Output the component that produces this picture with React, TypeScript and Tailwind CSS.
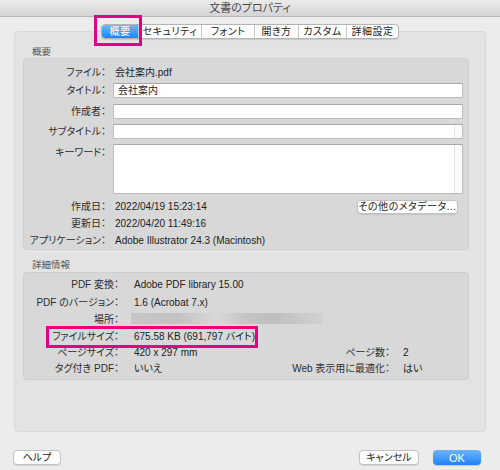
import React from "react";

const tabs = [
  { label: "概要", w: "w-[36px]" },
  { label: "セキュリティ", w: "w-[63px]" },
  { label: "フォント", w: "w-[53px]" },
  { label: "開き方", w: "w-[44px]" },
  { label: "カスタム", w: "w-[48px]" },
  { label: "詳細設定", w: "w-[52px]" },
];

function Label({ children }: { children: React.ReactNode }) {
  return <div className="w-[82px] shrink-0 whitespace-nowrap text-right text-[#2e2e2e]">{children}</div>;
}

function TextInput({ value, scroll }: { value?: string; scroll?: boolean }) {
  return (
    <div className="ml-[7px] flex h-[15px] w-[350px] items-center border border-[#bcbcbc] border-t-[#a9a9a9] bg-white">
      <span className="flex-1 pl-[4px] text-[#222]">{value}</span>
      {scroll && <div className="h-full w-[8px] border-l border-[#e6e6e6] bg-[#fafafa]" />}
    </div>
  );
}

function InfoRow({ h, label, value, rLabel, rValue, children }: {
  h: string;
  label: string;
  value?: React.ReactNode;
  rLabel?: string;
  rValue?: string;
  children?: React.ReactNode;
}) {
  return (
    <div className={`relative flex items-center whitespace-nowrap ${h}`}>
      <div className="w-[95px] shrink-0 text-right text-[#2e2e2e]">{label}</div>
      <div className="ml-[15px] w-[150px] shrink-0 text-[#222]">{value}</div>
      {rLabel && <div className="w-[106px] shrink-0 text-right text-[#2e2e2e]">{rLabel}</div>}
      {rValue && <div className="ml-[13px] text-[#222]">{rValue}</div>}
      {children}
    </div>
  );
}

export default function App() {
  return (
    <div className="flex h-[470px] w-[500px] flex-col overflow-hidden bg-[#ececec] font-['Liberation_Sans','Noto_Sans_CJK_JP',sans-serif] text-[10px] leading-[12px] [font-feature-settings:'palt']">
      {/* タイトルバー */}
      <div className="flex h-[17px] shrink-0 items-center justify-center border-b border-[#b8b8b8] bg-gradient-to-b from-[#ebebeb] to-[#d4d4d4] text-[11px] text-[#4a4a4a]">
        文書のプロパティ
      </div>

      {/* タブパネル */}
      <div className="relative mx-[14px] mt-[14px] h-[401px] shrink-0 rounded-[4px] border border-[#d8d8d8] bg-[#e3e3e3]">
        <div className="relative -mt-[8px] ml-[86px] flex h-[15px] w-fit rounded-[4px] border border-[#b4b4b4] bg-white shadow-[0_1px_1px_rgba(0,0,0,0.12)]">
          {tabs.map((t, i) => (
            <div
              key={t.label}
              className={`flex items-center justify-center tracking-[0.5px] ${t.w} ${
                i === 0
                  ? "rounded-l-[3px] bg-gradient-to-b from-[#6db6fb] to-[#1c83f8] text-white"
                  : "border-l border-[#c8c8c8] text-[#222]"
              }`}
            >
              {t.label}
            </div>
          ))}
          <div className="pointer-events-none absolute -left-[8px] -top-[10px] h-[31px] w-[48px] border-[3px] border-[#e4007f]" />
        </div>

        <div className="mt-[7px] h-[12px] pl-[17px] text-[9.5px] text-[#555]">概要</div>

        {/* 概要グループ */}
        <div className="ml-[8px] mr-[16px] h-[192px] rounded-[4px] border border-[#cfcfcf] bg-[#d8d8d8]">
          <div className="mt-[7px] flex h-[14px] items-center">
            <Label>ファイル：</Label>
            <span className="ml-[9px] text-[#222]">会社案内.pdf</span>
          </div>
          <div className="mt-[3px] flex items-center">
            <Label>タイトル：</Label>
            <TextInput value="会社案内" />
          </div>
          <div className="mt-[6px] flex items-center">
            <Label>作成者：</Label>
            <TextInput />
          </div>
          <div className="mt-[5px] flex items-center">
            <Label>サブタイトル：</Label>
            <TextInput scroll />
          </div>
          <div className="mt-[5px] flex items-start">
            <div className="pt-[3px]">
              <Label>キーワード：</Label>
            </div>
            <div className="ml-[7px] flex h-[50px] w-[350px] border border-[#bcbcbc] border-t-[#a9a9a9] bg-white">
              <div className="flex-1" />
              <div className="h-full w-[8px] border-l border-[#e6e6e6] bg-[#fafafa]" />
            </div>
          </div>
          <div className="mt-[4px] flex h-[17px] items-center">
            <Label>作成日：</Label>
            <span className="ml-[9px] flex-1 text-[#222]">2022/04/19 15:23:14</span>
            <div className="mr-[10px] flex h-[14px] w-[101px] items-center justify-center rounded-[4px] border border-[#c2c2c2] bg-white tracking-[0.5px] text-[#222] shadow-[0_1px_1px_rgba(0,0,0,0.1)]">
              その他のメタデータ...
            </div>
          </div>
          <div className="flex h-[17px] items-center">
            <Label>更新日：</Label>
            <span className="ml-[9px] text-[#222]">2022/04/20 11:49:16</span>
          </div>
          <div className="flex h-[17px] items-center">
            <Label>アプリケーション：</Label>
            <span className="ml-[9px] text-[#222]">Adobe Illustrator 24.3 (Macintosh)</span>
          </div>
        </div>

        <div className="mt-[9px] h-[13px] pl-[17px] text-[9.5px] text-[#555]">詳細情報</div>

        {/* 詳細情報グループ */}
        <div className="ml-[8px] mr-[16px] h-[108px] rounded-[4px] border border-[#cfcfcf] bg-[#d8d8d8] pt-[2px]">
          <InfoRow h="h-[19px]" label="PDF 変換：" value="Adobe PDF library 15.00" />
          <InfoRow h="h-[17px]" label="PDF のバージョン：" value="1.6 (Acrobat 7.x)" />
          <InfoRow h="h-[17px]" label="場所：">
            <div className="absolute left-[107px] top-[2px] h-[11px] w-[192px] bg-[linear-gradient(90deg,#c6c6c6,#c2c2c2_25%,#d9d9d9_45%,#c4c4c4_60%,#bfbfbf_75%,#d2d2d2)]" />
          </InfoRow>
          <InfoRow h="h-[17px]" label="ファイルサイズ：" value="675.58 KB (691,797 バイト)">
            <div className="pointer-events-none absolute -top-[2px] left-[22px] h-[22px] w-[212px] border-[3px] border-[#e4007f]" />
          </InfoRow>
          <InfoRow h="h-[16px]" label="ページサイズ：" value="420 x 297 mm" rLabel="ページ数：" rValue="2" />
          <InfoRow h="h-[16px]" label="タグ付き PDF：" value="いいえ" rLabel="Web 表示用に最適化：" rValue="はい" />
        </div>
      </div>

      {/* ボタン */}
      <div className="mt-[18px] flex h-[15px] items-center px-[13px]">
        <div className="flex h-[15px] w-[48px] items-center justify-center rounded-[4px] border border-[#c2c2c2] bg-white text-[#222] shadow-[0_1px_1px_rgba(0,0,0,0.1)]">
          ヘルプ
        </div>
        <div className="flex-1" />
        <div className="flex h-[15px] w-[60px] items-center justify-center rounded-[4px] border border-[#c2c2c2] bg-white text-[#222] shadow-[0_1px_1px_rgba(0,0,0,0.1)]">
          キャンセル
        </div>
        <div className="ml-[14px] mr-[6px] flex h-[15px] w-[48px] items-center justify-center rounded-[4px] bg-gradient-to-b from-[#6ab4fb] to-[#1b82f8] text-[11px] text-white shadow-[0_1px_1px_rgba(0,0,0,0.15)]">
          OK
        </div>
      </div>
    </div>
  );
}
